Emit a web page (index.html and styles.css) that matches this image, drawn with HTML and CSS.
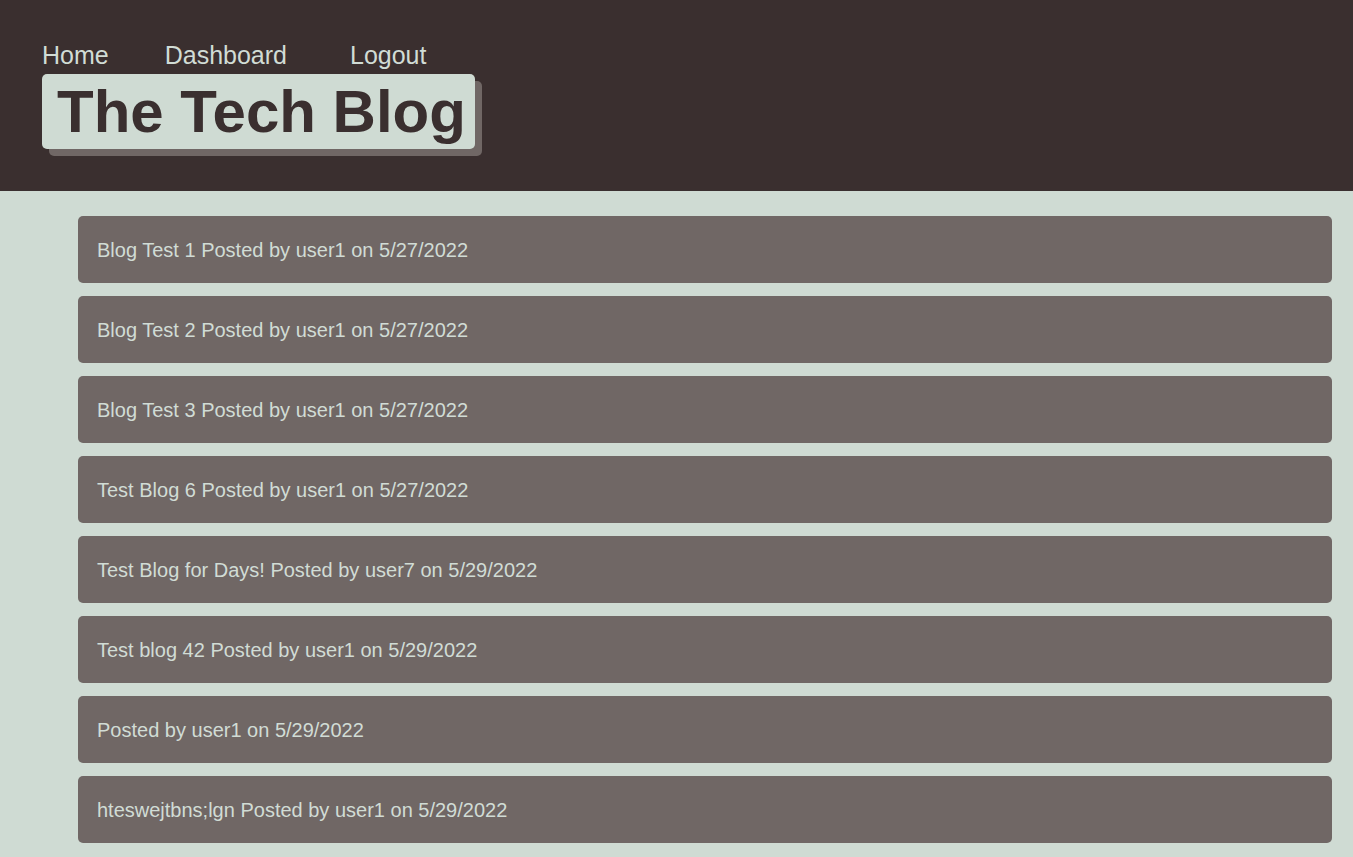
FILE: index.html
```html
<!DOCTYPE html>
<html lang="en">
<head>
<meta charset="utf-8">
<title>The Tech Blog</title>
<link rel="stylesheet" href="styles.css">
</head>
<body>
<header class="site-header">
  <nav class="nav">
    <a class="nav-link" href="#">Home</a>
    <a class="nav-link" href="#">Dashboard</a>
    <a class="nav-link nav-logout" href="#">Logout</a>
  </nav>
  <h1 class="brand">The Tech Blog</h1>
</header>
<main class="posts">
  <a class="post" href="#">Blog Test 1 Posted by user1 on 5/27/2022</a>
  <a class="post" href="#">Blog Test 2 Posted by user1 on 5/27/2022</a>
  <a class="post" href="#">Blog Test 3 Posted by user1 on 5/27/2022</a>
  <a class="post" href="#">Test Blog 6 Posted by user1 on 5/27/2022</a>
  <a class="post" href="#">Test Blog for Days! Posted by user7 on 5/29/2022</a>
  <a class="post" href="#">Test blog 42 Posted by user1 on 5/29/2022</a>
  <a class="post" href="#"> Posted by user1 on 5/29/2022</a>
  <a class="post" href="#">hteswejtbns;lgn Posted by user1 on 5/29/2022</a>
</main>
</body>
</html>
```
FILE: styles.css
```css
html, body {
  margin: 0;
  padding: 0;
}
body {
  background: #cfdbd3;
  font-family: "Liberation Sans", Arial, sans-serif;
  color: #d1dcd5;
}
.site-header {
  background: #3a2f2f;
  height: 191px;
  box-sizing: border-box;
  padding: 41px 42px 0;
}
.nav {
  display: flex;
  gap: 56px;
  font-size: 25px;
  line-height: 29px;
}
.nav-link {
  color: #d1dcd5;
  text-decoration: none;
}
.nav-logout {
  margin-left: 7px;
}
.brand {
  display: inline-block;
  margin: 4px 0 0;
  padding: 0 9px 0 15px;
  height: 75px;
  line-height: 75px;
  font-size: 60px;
  font-weight: bold;
  color: #3a2f2f;
  background: #cfdbd3;
  border-radius: 5px;
  box-shadow: 7px 7px 0 #706765;
}
.posts {
  display: flex;
  flex-direction: column;
  gap: 13px;
  padding: 25px 21px 13px 78px;
}
.post {
  display: block;
  background: #706765;
  color: #d1dcd5;
  text-decoration: none;
  border-radius: 5px;
  font-size: 20px;
  line-height: 23px;
  padding: 23px 19px 21px;
}
```
